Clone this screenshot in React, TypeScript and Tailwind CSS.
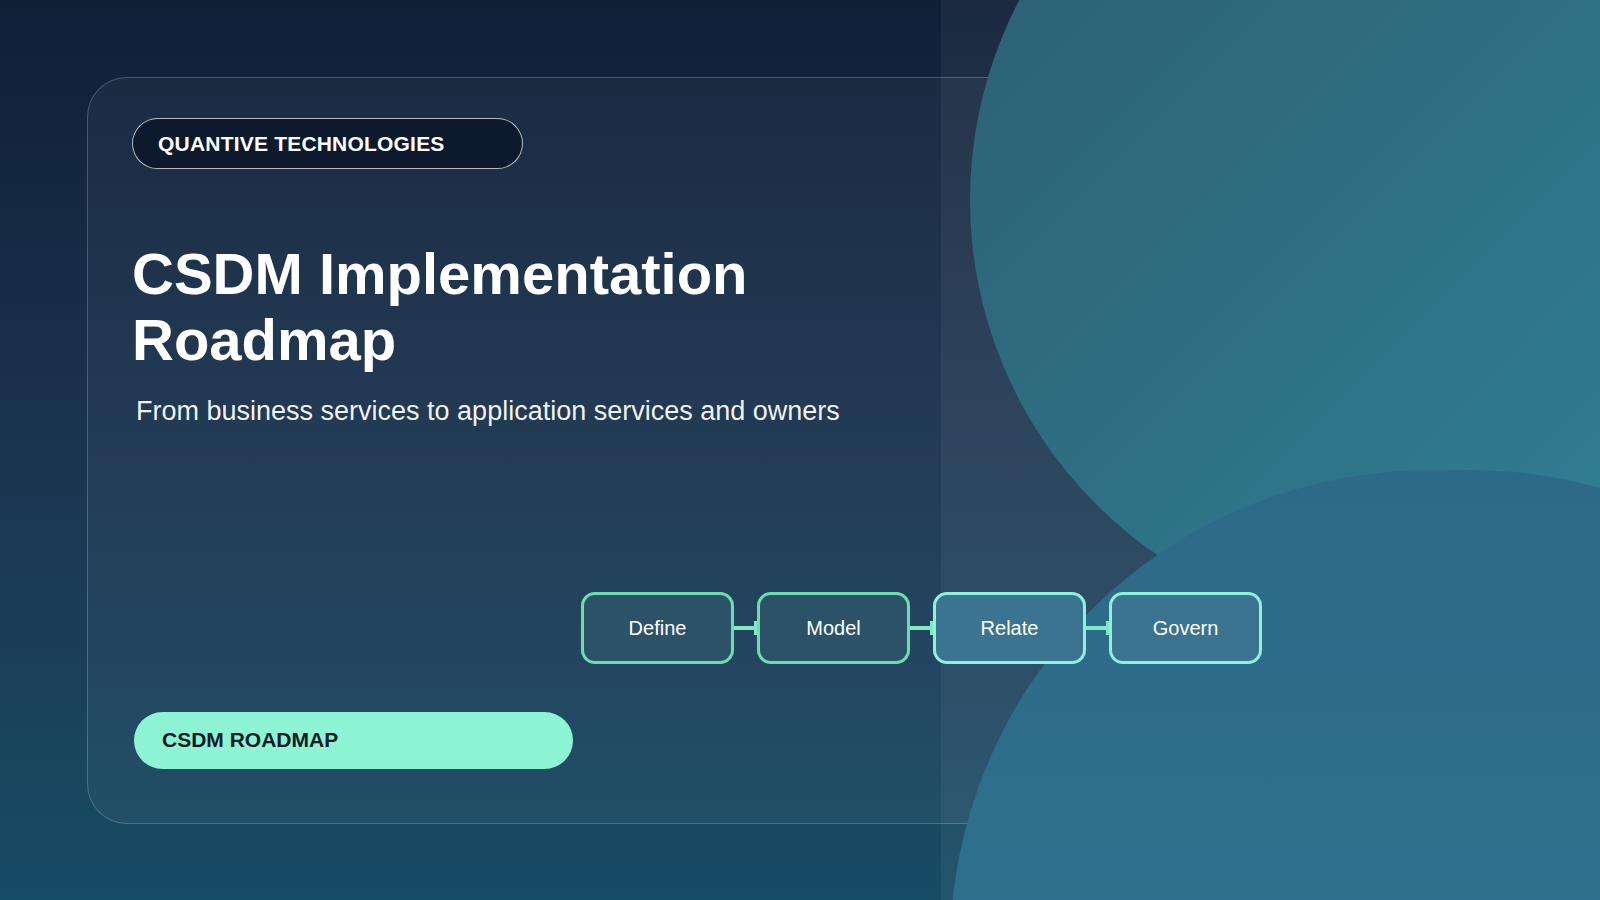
import React from 'react';

const steps = ['Define', 'Model', 'Relate', 'Govern'];

const App = () => {
  return (
    <div
      className="relative w-[1600px] h-[900px] overflow-hidden bg-gradient-to-b from-[#0f1f36] via-[#1b3450] to-[#174c66]"
      style={{ fontFamily: '"Liberation Sans", Arial, sans-serif' }}
    >
      {/* card (no stacking context so content can sit above decorations) */}
      <div className="relative ml-[87px] mt-[77px] w-[1430px] h-[747px] rounded-[40px] border border-white/20 bg-white/[0.04] pl-[44px] pt-[40px]">
        <div className="relative z-20 flex flex-col">
          <div className="w-[391px] h-[51px] rounded-full border border-white/70 bg-[#0d192d] flex items-center pl-[25px] text-white font-bold text-[21px] tracking-[0.2px]">
            QUANTIVE TECHNOLOGIES
          </div>
          <h1 className="mt-[72px] text-white font-bold text-[58px] leading-[66px]">
            CSDM Implementation
            <br />
            Roadmap
          </h1>
          <p className="mt-[18px] ml-[4px] text-white/95 text-[27px]">
            From business services to application services and owners
          </p>
          <div className="mt-[160px] ml-[449px] flex items-center">
            {steps.map((s, i) => (
              <React.Fragment key={s}>
                {i > 0 && (
                  <div className="flex items-center">
                    <div className="w-[20px] h-[4px] bg-[#7fe8c6]" />
                    <div className="w-[3px] h-[14px] bg-[#7fe8c6]" />
                  </div>
                )}
                <div
                  className={`w-[153px] h-[72px] rounded-[14px] border-[3px] flex items-center justify-center text-white text-[20px] ${
                    i < 2 ? 'border-[#6fdcb0] bg-[#2c5268]' : 'border-[#8ff0dc] bg-[#3a7490]'
                  }`}
                >
                  {s}
                </div>
              </React.Fragment>
            ))}
          </div>
          <div className="mt-[48px] ml-[2px] w-[439px] h-[57px] rounded-full bg-[#8ef5d4] flex items-center pl-[28px] text-[#0b1a24] font-bold text-[21px]">
            CSDM ROADMAP
          </div>
        </div>
      </div>

      {/* right side decoration */}
      <div className="absolute z-10 top-0 bottom-0 left-[941px] right-0 bg-white/[0.05]" />
      <div className="absolute z-10 left-[970px] top-[-230px] w-[860px] h-[860px] rounded-full bg-gradient-to-br from-[#2c5c70] to-[#30859a]" />
      <div className="absolute z-10 left-[950px] top-[470px] w-[1000px] h-[960px] rounded-full bg-gradient-to-b from-[#2d6a88] to-[#2f7892]" />
    </div>
  );
};

export default App;
